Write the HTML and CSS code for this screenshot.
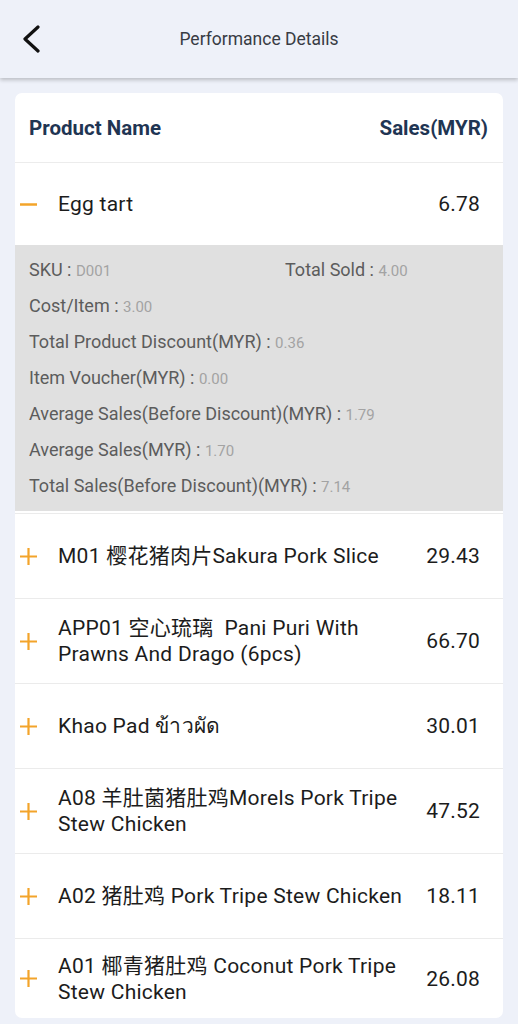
FILE: index.html
```html
<!DOCTYPE html>
<html>
<head>
<meta charset="utf-8">
<link rel="stylesheet" href="styles.css">
</head>
<body>
<header class="topbar">
  <svg class="back" width="20" height="28" viewBox="0 0 20 28"><polyline points="17,2 4,14 17,26" fill="none" stroke="#111" stroke-width="3.2" stroke-linecap="round" stroke-linejoin="round"/></svg>
  <div class="title">Performance Details</div>
</header>
<main class="card">
  <div class="thead"><span>Product Name</span><span>Sales(MYR)</span></div>

  <div class="item open">
    <div class="row first">
      <span class="ic"><svg width="17" height="17" viewBox="0 0 17 17"><line x1="0" y1="8.5" x2="17" y2="8.5" stroke="#f3a42a" stroke-width="2.4"/></svg></span>
      <span class="name">Egg tart</span>
      <span class="val">6.78</span>
    </div>
    <div class="details">
      <div class="d"><span class="lb">SKU : </span><span class="v">D001</span></div>
      <div class="d"><span class="lb">Total Sold : </span><span class="v">4.00</span></div>
      <div class="d full"><span class="lb">Cost/Item : </span><span class="v">3.00</span></div>
      <div class="d full"><span class="lb">Total Product Discount(MYR) : </span><span class="v">0.36</span></div>
      <div class="d full"><span class="lb">Item Voucher(MYR) : </span><span class="v">0.00</span></div>
      <div class="d full"><span class="lb">Average Sales(Before Discount)(MYR) : </span><span class="v">1.79</span></div>
      <div class="d full"><span class="lb">Average Sales(MYR) : </span><span class="v">1.70</span></div>
      <div class="d full"><span class="lb">Total Sales(Before Discount)(MYR) : </span><span class="v">7.14</span></div>
    </div>
  </div>

  <div class="item">
    <div class="row">
      <span class="ic"><svg width="17" height="17" viewBox="0 0 17 17"><path d="M0 8.5H17M8.5 0V17" stroke="#f3a42a" stroke-width="2.2"/></svg></span>
      <span class="name">M01 樱花猪肉片Sakura Pork Slice</span>
      <span class="val">29.43</span>
    </div>
  </div>
  <div class="item">
    <div class="row">
      <span class="ic"><svg width="17" height="17" viewBox="0 0 17 17"><path d="M0 8.5H17M8.5 0V17" stroke="#f3a42a" stroke-width="2.2"/></svg></span>
      <span class="name">APP01 空心琉璃&nbsp; Pani Puri With Prawns And Drago (6pcs)</span>
      <span class="val">66.70</span>
    </div>
  </div>
  <div class="item">
    <div class="row">
      <span class="ic"><svg width="17" height="17" viewBox="0 0 17 17"><path d="M0 8.5H17M8.5 0V17" stroke="#f3a42a" stroke-width="2.2"/></svg></span>
      <span class="name">Khao Pad ข้าวผัด</span>
      <span class="val">30.01</span>
    </div>
  </div>
  <div class="item">
    <div class="row">
      <span class="ic"><svg width="17" height="17" viewBox="0 0 17 17"><path d="M0 8.5H17M8.5 0V17" stroke="#f3a42a" stroke-width="2.2"/></svg></span>
      <span class="name">A08 羊肚菌猪肚鸡Morels Pork Tripe Stew Chicken</span>
      <span class="val">47.52</span>
    </div>
  </div>
  <div class="item">
    <div class="row">
      <span class="ic"><svg width="17" height="17" viewBox="0 0 17 17"><path d="M0 8.5H17M8.5 0V17" stroke="#f3a42a" stroke-width="2.2"/></svg></span>
      <span class="name">A02 猪肚鸡 Pork Tripe Stew Chicken</span>
      <span class="val">18.11</span>
    </div>
  </div>
  <div class="item last">
    <div class="row">
      <span class="ic"><svg width="17" height="17" viewBox="0 0 17 17"><path d="M0 8.5H17M8.5 0V17" stroke="#f3a42a" stroke-width="2.2"/></svg></span>
      <span class="name">A01 椰青猪肚鸡 Coconut Pork Tripe Stew Chicken</span>
      <span class="val">26.08</span>
    </div>
  </div>
</main>
</body>
</html>
```

FILE: styles.css
```css
* { box-sizing: border-box; }
html, body { margin: 0; padding: 0; }
body {
  background: #eef1f9;
  font-family: Roboto, "Noto Sans CJK SC", "Noto Sans", sans-serif;
  color: #1a1a1a;
  width: 518px;
  height: 1024px;
  overflow: hidden;
}
.topbar {
  height: 78px;
  background: #eef1f9;
  box-shadow: 0 2px 4px rgba(0,0,0,0.22);
  display: flex;
  align-items: center;
  position: relative;
}
.back {
  margin-left: 21px;
  margin-top: 0;
}
.title {
  position: absolute;
  left: 0; right: 0;
  text-align: center;
  font-size: 17.5px;
  color: #383c44;
}
.card {
  margin: 15px 15px 0 15px;
  background: #fff;
  border-radius: 7px;
  overflow: hidden;
}
.thead {
  height: 70px;
  display: flex;
  align-items: center;
  justify-content: space-between;
  padding: 0 15px 0 14px;
  font-weight: 700;
  font-size: 20.5px;
  color: #1f3553;
  border-bottom: 1px solid #ececec;
}
.item + .item { border-top: 1px solid #ebebeb; }
.row {
  display: flex;
  align-items: center;
  min-height: 84px;
  padding: 0 23px 0 5px;
  font-size: 21px;
  line-height: 26px;
  color: #1c1c1c;
}
.row.first { min-height: 82px; }
.last .row { min-height: 79px; }
.ic {
  width: 17px;
  height: 17px;
  display: flex;
  flex: none;
  margin-right: 21px;
}
.name { flex: 1; letter-spacing: 0.25px; }
.val {
  width: 62px;
  margin-left: 4px;
  text-align: right;
  flex: none;
  letter-spacing: 0.2px;
}
.details {
  background: #e0e0e0;
  padding: 7px 14px;
  display: grid;
  grid-template-columns: 256px 1fr;
  margin-bottom: 2px;
}
.d {
  height: 36px;
  line-height: 36px;
  white-space: nowrap;
}
.d.full { grid-column: 1 / -1; }
.lb { font-size: 18px; color: #5c5c5c; }
.v { font-size: 15px; color: #a3a3a3; }
```
